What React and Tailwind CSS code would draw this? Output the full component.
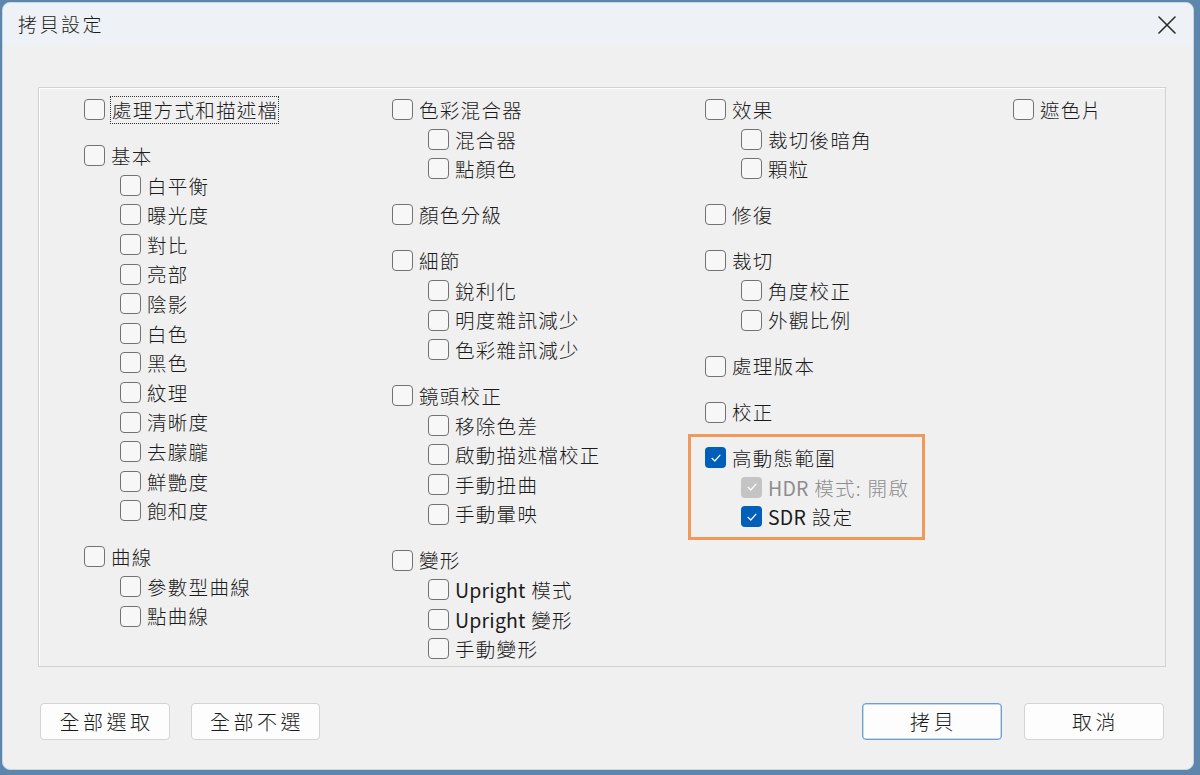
import React from "react";

const FONT = { fontFamily: '"Noto Sans CJK TC", "Noto Sans", sans-serif' };

function Check({ color = "white" }) {
  return (
    <svg width="12" height="12" viewBox="0 0 12 12" fill="none">
      <path d="M2 6.3 L4.8 9 L10 3.2" stroke={color} strokeWidth="1.2" strokeLinecap="round" strokeLinejoin="round" />
    </svg>
  );
}

function Label({ text }) {
  const parts = text.split(/([A-Za-z]+)/).filter(Boolean);
  return parts.map((p, i) =>
    /^[A-Za-z]+$/.test(p) ? (
      <span key={i} className="font-normal tracking-[0.2px]">
        {p}
      </span>
    ) : (
      <span key={i}>{p}</span>
    )
  );
}

function Row({ label, indent, checked, disabled, focus }) {
  let box;
  if (disabled) {
    box = (
      <span className="flex h-[21px] w-[21px] shrink-0 items-center justify-center rounded-[4px] bg-[#c4c4c4]">
        <Check />
      </span>
    );
  } else if (checked) {
    box = (
      <span className="flex h-[21px] w-[21px] shrink-0 items-center justify-center rounded-[4px] bg-[#005fb8]">
        <Check />
      </span>
    );
  } else {
    box = <span className="h-[21px] w-[21px] shrink-0 rounded-[4px] border border-[#727272] bg-[#f7f7f7]" />;
  }
  return (
    <div className={`flex h-[29.6px] items-center whitespace-nowrap ${indent ? "pl-[36px]" : ""}`}>
      {box}
      <span
        className={`text-[19.5px] font-light leading-none tracking-[1.3px] ${disabled ? "text-[#8d8d8d]" : "text-[#1b1b1b]"} ${
          focus ? "ml-[5px] border border-dotted border-[#333] py-[3px] pl-[1px] pr-[0px]" : "ml-[6px]"
        }`}
      >
        <Label text={label} />
      </span>
    </div>
  );
}

function Group({ items, first }) {
  return (
    <div className={first ? "" : "mt-[16.4px]"}>
      {items.map((it, i) => (
        <Row key={i} {...it} indent={i > 0} />
      ))}
    </div>
  );
}

const L = (arr) => arr.map((t) => (typeof t === "string" ? { label: t } : t));

const col1 = [
  L([{ label: "處理方式和描述檔", focus: true }]),
  L(["基本", "白平衡", "曝光度", "對比", "亮部", "陰影", "白色", "黑色", "紋理", "清晰度", "去朦朧", "鮮艷度", "飽和度"]),
  L(["曲線", "參數型曲線", "點曲線"]),
];
const col2 = [
  L(["色彩混合器", "混合器", "點顏色"]),
  L(["顏色分級"]),
  L(["細節", "銳利化", "明度雜訊減少", "色彩雜訊減少"]),
  L(["鏡頭校正", "移除色差", "啟動描述檔校正", "手動扭曲", "手動暈映"]),
  L(["變形", "Upright 模式", "Upright 變形", "手動變形"]),
];
const col3 = [
  L(["效果", "裁切後暗角", "顆粒"]),
  L(["修復"]),
  L(["裁切", "角度校正", "外觀比例"]),
  L(["處理版本"]),
  L(["校正"]),
];
const col4 = [L(["遮色片"])];

function Column({ groups, width, children }) {
  return (
    <div className={`flex shrink-0 flex-col ${width}`}>
      {groups.map((g, i) => (
        <Group key={i} items={g} first={i === 0} />
      ))}
      {children}
    </div>
  );
}

function Button({ children, w, primary }) {
  return (
    <button
      className={`flex h-[37px] ${w} items-center justify-center rounded-[4px] border bg-[#fdfdfd] pl-[3px] text-[20px] font-light tracking-[3.5px] text-[#1b1b1b] ${
        primary ? "border-[#6f9fcf] shadow-[inset_0_0_0_0.5px_#8fb5dc]" : "border-[#d3d3d3]"
      }`}
    >
      {children}
    </button>
  );
}

export default function App() {
  return (
    <div className="h-[775px] w-[1200px] overflow-hidden bg-[#5d86ad] pl-[2px] pt-[2px]" style={FONT}>
      <div className="flex h-[768px] w-[1192px] flex-col overflow-hidden rounded-[8px] border border-[#c9d6e2] bg-[#f0f0f0]">
        <div className="flex h-[43px] shrink-0 items-center justify-between bg-[#eef2f6] pl-[15px] pr-[17px]">
          <span className="text-[19px] font-light tracking-[2.5px] text-[#1b1b1b]">拷貝設定</span>
          <svg width="18" height="18" viewBox="0 0 18 18">
            <path d="M1 1 L17 17 M17 1 L1 17" stroke="#2b2b2b" strokeWidth="1.6" strokeLinecap="round" />
          </svg>
        </div>
        <div className="ml-[35px] mt-[41px] flex h-[580px] w-[1128px] shrink-0 border border-[#d2d2d2] pl-[45px] pt-[7px] shadow-[inset_1px_1px_0_#ffffff]">
          <Column groups={col1} width="w-[308px]" />
          <Column groups={col2} width="w-[313px]" />
          <Column groups={col3} width="w-[308px]">
            <div className="-ml-[17px] mt-[7px] w-[237px] border-[3px] border-[#f0995a] pb-[5px] pl-[14px] pt-[6px]">
              <Row label="高動態範圍" checked />
              <Row label="HDR 模式: 開啟" indent disabled checked />
              <Row label="SDR 設定" indent checked />
            </div>
          </Column>
          <Column groups={col4} width="w-[120px]" />
        </div>
        <div className="mt-[36px] flex items-center pl-[37px] pr-[29px]">
          <Button w="w-[130px]">全部選取</Button>
          <div className="ml-[21px]">
            <Button w="w-[129px]">全部不選</Button>
          </div>
          <div className="flex-1" />
          <Button w="w-[140px]" primary>
            拷貝
          </Button>
          <div className="ml-[22px]">
            <Button w="w-[140px]">取消</Button>
          </div>
        </div>
      </div>
    </div>
  );
}
